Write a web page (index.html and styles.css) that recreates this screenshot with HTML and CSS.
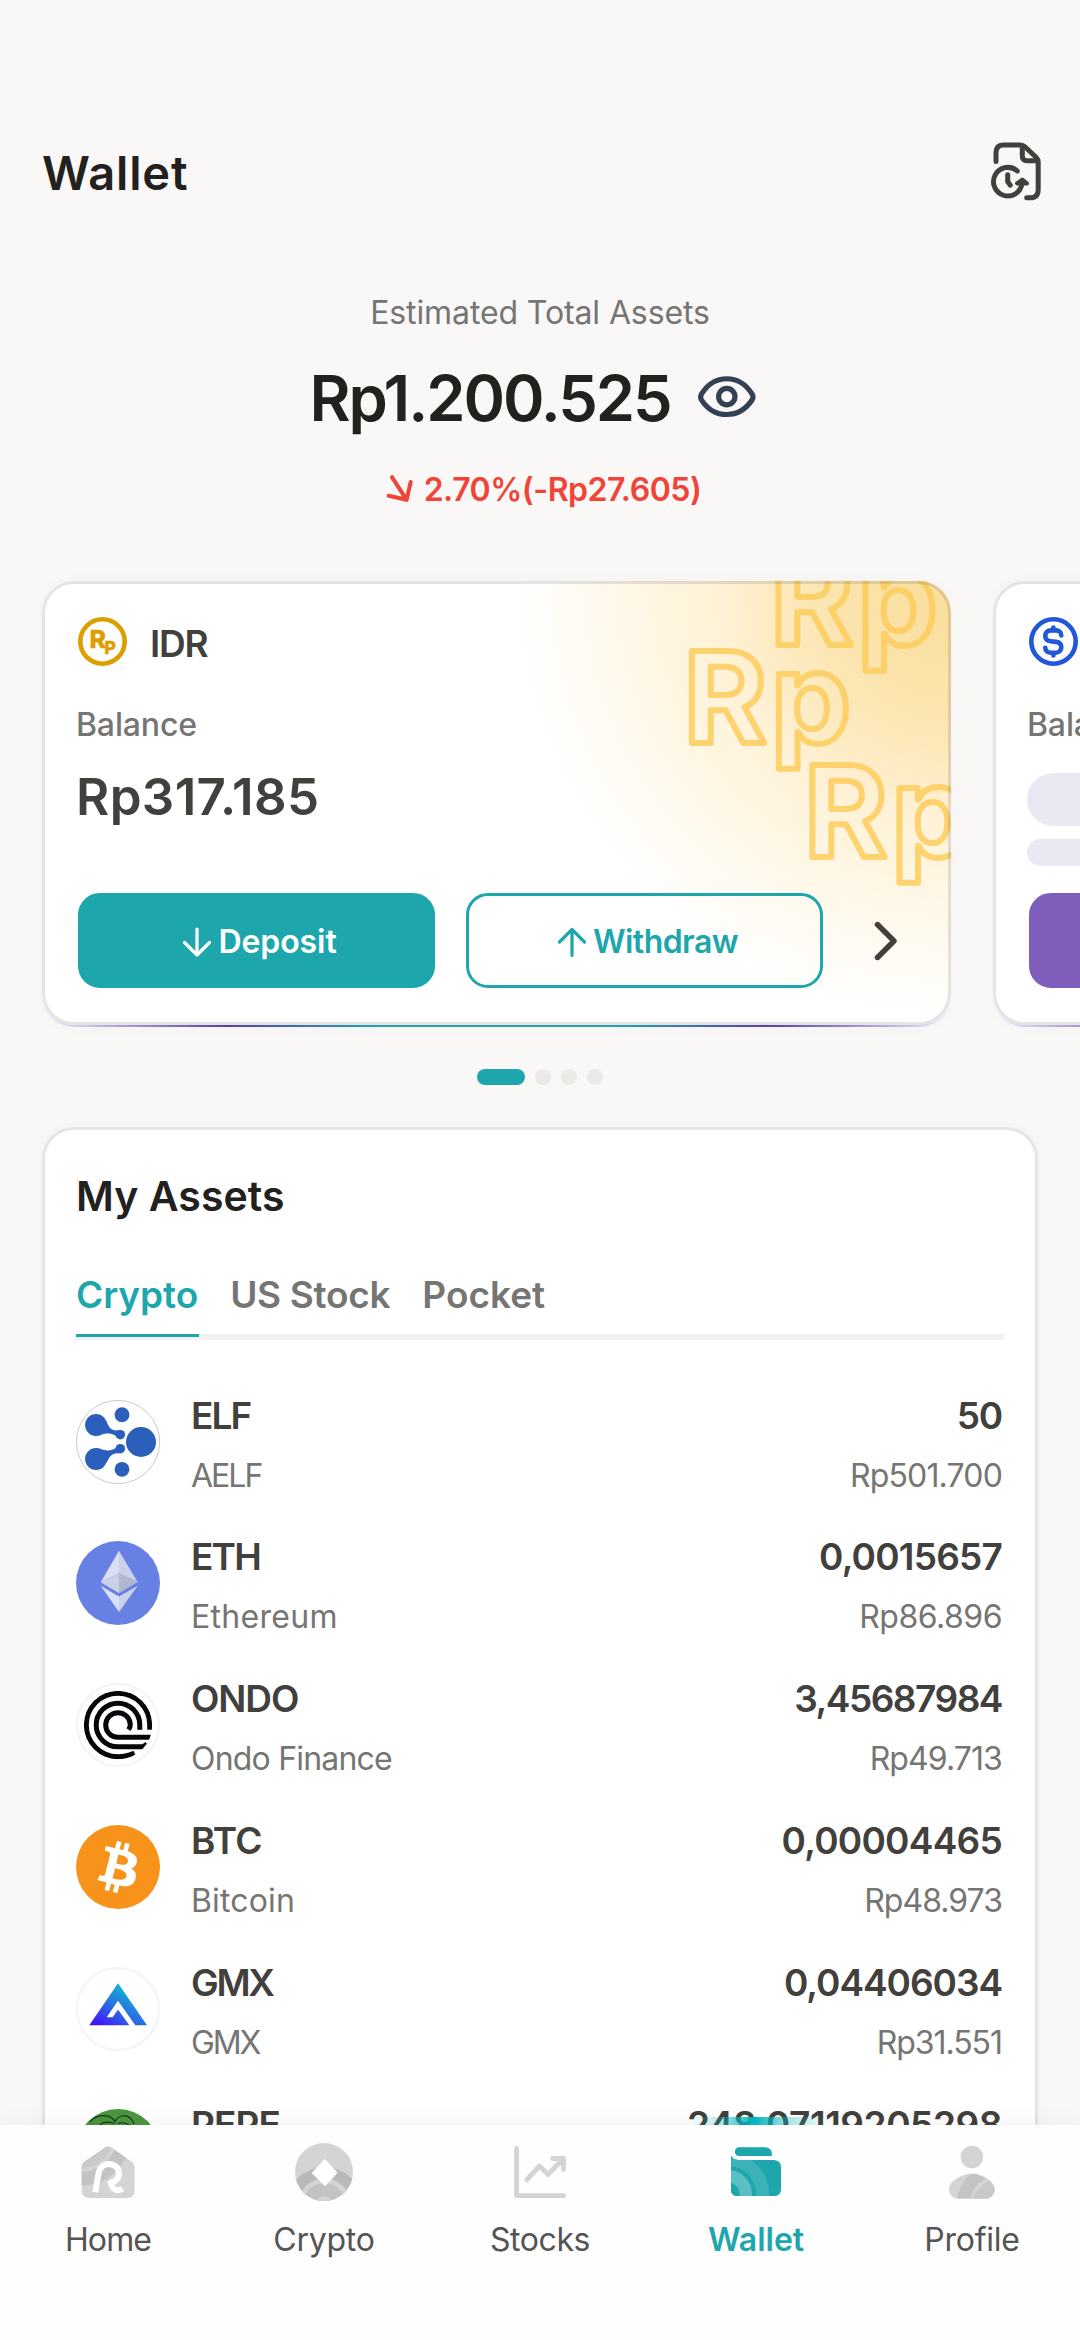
FILE: index.html
```
<!DOCTYPE html>
<html lang="en">
<head>
<meta charset="utf-8">
<title>Wallet</title>
<link rel="stylesheet" href="styles.css">
</head>
<body>
<main class="screen">
  <header class="header">
    <h1 class="header__title">Wallet</h1>
    <svg class="header__history" viewBox="0 0 60 60" fill="none" stroke="currentColor" stroke-width="5" stroke-linecap="round" stroke-linejoin="round">
      <path d="M10 20.5V11.5Q10 3.9 17.5 3.9H34Q37 3.9 39 5.8L50.3 16.5Q52.2 18.4 52.2 21V48.5Q52.2 56.8 44.5 56.8H40.7"/>
      <path d="M36.3 6V15Q36.3 19.7 41 19.7H50"/>
      <path d="M31.3 30A14.3 14.3 0 1 0 36 42.5"/>
      <path d="M21.7 33.8V40.5L24.2 44.2"/>
      <path d="M36.2 38.6L31 42.4H41Z" fill="currentColor" stroke-width="4"/>
    </svg>
  </header>

  <section class="total">
    <p class="total__label">Estimated Total Assets</p>
    <div class="total__value">
      <span class="total__amount">Rp1.200.525</span>
      <svg class="total__eye" viewBox="0 0 64 64" fill="none" stroke="currentColor" stroke-width="5.2" stroke-linejoin="round">
        <path d="M6.4 29.2C19.2 8.6 44.3 8.6 57.2 29.2Q58.8 32 57.2 34.8C44.3 54.4 19.2 54.4 6.4 34.8Q4.8 32 6.4 29.2Z"/>
        <circle cx="31.8" cy="31.6" r="8.2"/>
      </svg>
    </div>
    <div class="total__change">
      <svg class="total__arrow" viewBox="0 0 32 32" fill="none" stroke="currentColor" stroke-width="4" stroke-linecap="round" stroke-linejoin="round"><path d="M8 3.2L22.6 25.8M4.6 21.7L22.6 25.8L26.7 8"/></svg>
      <span>2.70%(-Rp27.605)</span>
    </div>
  </section>

  <section class="carousel">
    <article class="wallet">
      <div class="wallet__body wallet__body--idr">
        <svg class="wallet__mark" viewBox="0 0 290 444">
          <g class="mark">
            <text x="109" y="64">Rp</text>
            <text x="22.500" y="162">Rp</text>
            <text x="143" y="276">Rp</text>
          </g>
        </svg>
        <div class="wallet__head">
          <svg class="wallet__icon wallet__icon--idr" viewBox="0 0 49 49">
            <circle cx="24.500" cy="24.500" r="22.200" fill="none" stroke="currentColor" stroke-width="4.600"/>
            <text class="coin coin--r" x="11.500" y="31">R</text>
            <text class="coin coin--p" x="26.300" y="37">P</text>
          </svg>
          <h2 class="wallet__name">IDR</h2>
        </div>
        <p class="wallet__label">Balance</p>
        <p class="wallet__balance">Rp317.185</p>
        <div class="wallet__actions">
          <button class="btn btn--fill">
            <svg class="btn__icon" viewBox="0 0 36 36"><path d="M18 5V31M5.500 18.500L18 31L30.500 18.500"/></svg>
            <span class="btn__deposit">Deposit</span>
          </button>
          <button class="btn btn--line">
            <svg class="btn__icon" viewBox="0 0 36 36"><path d="M18 31.500V5.500M5.500 18L18 5.500L30.500 18"/></svg>
            <span class="btn__withdraw">Withdraw</span>
          </button>
          <svg class="wallet__next" viewBox="0 0 24 40"><path d="M3.500 3.500L20 20L3.500 36.500"/></svg>
        </div>
      </div>
    </article>
    <article class="wallet">
      <div class="wallet__body">
        <div class="wallet__head">
          <svg class="wallet__icon wallet__icon--usd" viewBox="0 0 49 49" fill="none" stroke="currentColor" stroke-width="4.600" stroke-linecap="round">
            <circle cx="24.500" cy="24.500" r="22.200"/>
            <path d="M32.300 18.500C32.300 15 30 13.400 27 13.400H22C18.500 13.400 16.300 15.700 16.300 18.700C16.300 22 18.400 23.900 21.500 24.200L27 24.900C30.200 25.300 32.300 27.200 32.300 30.300C32.300 33.500 30 35.700 26.700 35.700H22C18.800 35.700 16.300 34 16.300 30.800M24.400 10.500V13M24.400 36V38.500"/>
          </svg>
        </div>
        <p class="wallet__label">Balance</p>
        <div class="skeleton skeleton--lg"></div>
        <div class="skeleton skeleton--sm"></div>
        <div class="wallet__actions wallet__actions--usd"><span class="btn btn--usd"></span></div>
      </div>
    </article>
  </section>

  <div class="dots"><i class="dot dot--on"></i><i class="dot"></i><i class="dot"></i><i class="dot"></i></div>

  <section class="assets">
    <h2 class="assets__title">My Assets</h2>
    <nav class="tabs">
      <span class="tab tab--on">Crypto</span>
      <span class="tab tab--stock">US Stock</span>
      <span class="tab">Pocket</span>
    </nav>
    <ul class="list">
      <li class="row row--elf">
        <svg class="row__icon" viewBox="0 0 84 84">
          <circle cx="42" cy="42" r="41.600" fill="#fff" stroke="#bcbcbc" stroke-width=".8"/>
          <g fill="#2b5fbb">
            <circle cx="65" cy="42" r="15"/><circle cx="46" cy="14.700" r="7.400"/><circle cx="46" cy="69.300" r="7.400"/>
            <circle cx="20" cy="25" r="10.900"/><circle cx="20" cy="59" r="10.900"/>
            <circle cx="44.300" cy="34.700" r="4.800"/><circle cx="44.300" cy="48.700" r="4.800"/>
            <path d="M30.500 21C33 29 37 31.500 43.500 30V39.300C39 34 33 31.500 22 35.700Z"/>
            <path d="M22 48.300C33 52.500 39 50 43.500 44.500V53.300C37 52.500 34 55 30.500 63Z"/>
          </g>
        </svg>
        <div class="row__name"><b>ELF</b><span>AELF</span></div>
        <div class="row__value"><b>50</b><span>Rp501.700</span></div>
      </li>
      <li class="row row--eth">
        <svg class="row__icon" viewBox="0 0 84 84">
          <circle cx="42" cy="42" r="42" fill="#6780e3"/>
          <path fill="#dadff4" d="M43 9.700V32.500L24.700 41.300ZM24.700 44.700L43 55.500V71Z"/>
          <path fill="#cbd1ea" d="M43 9.700V32.500L61.700 41ZM61.700 44.700L43 55.500V71Z"/>
          <path fill="#cad0e7" d="M43 32.500V52.300L24.700 41.300Z"/>
          <path fill="#b2b8cf" d="M43 32.500V52.300L61.700 41Z"/>
        </svg>
        <div class="row__name"><b>ETH</b><span>Ethereum</span></div>
        <div class="row__value"><b>0,0015657</b><span>Rp86.896</span></div>
      </li>
      <li class="row row--ondo">
        <svg class="row__icon" viewBox="0 0 84 84">
          <clipPath id="ondo"><circle cx="42" cy="42" r="34.300"/></clipPath>
          <circle cx="42" cy="42" r="41" fill="#fff" stroke="#f3f3f9" stroke-width="2"/>
          <g clip-path="url(#ondo)" fill="none" stroke="#05070a" stroke-width="5">
            <path d="M73.700 46.700V42A31.700 31.700 0 1 0 42 73.700Q51 73.700 58.500 70"/>
            <path d="M63.800 46.700V42A21.800 21.800 0 1 0 42 63.800H67L71 61"/>
            <path d="M52.500 46.700Q54.300 44 54.300 42A12.300 12.300 0 1 0 42 54.300H75"/>
          </g>
        </svg>
        <div class="row__name"><b>ONDO</b><span>Ondo Finance</span></div>
        <div class="row__value"><b>3,45687984</b><span>Rp49.713</span></div>
      </li>
      <li class="row row--btc">
        <svg class="row__icon" viewBox="0 0 32 32">
          <circle cx="16" cy="16" r="16" fill="#f7931a"/>
          <path fill="#fff" d="M23.189 14.02c.314-2.096-1.283-3.223-3.465-3.975l.708-2.84-1.728-.43-.69 2.765c-.454-.114-.92-.22-1.385-.326l.695-2.783L15.596 6l-.708 2.839c-.376-.086-.746-.17-1.104-.26l.002-.009-2.384-.595-.46 1.846s1.283.294 1.256.312c.7.175.826.638.805 1.006l-.806 3.235c.048.012.11.03.18.057l-.183-.045-1.13 4.532c-.086.212-.303.531-.793.41.018.025-1.256-.313-1.256-.313l-.858 1.978 2.25.561c.418.105.828.215 1.231.318l-.715 2.872 1.727.43.708-2.84c.472.127.93.245 1.378.357l-.706 2.828 1.728.43.715-2.866c2.948.558 5.164.333 6.097-2.333.752-2.146-.037-3.385-1.588-4.192 1.13-.26 1.98-1.003 2.207-2.538zm-3.95 5.538c-.533 2.147-4.148.986-5.32.695l.95-3.805c1.172.293 4.929.872 4.37 3.11zm.535-5.569c-.487 1.953-3.495.96-4.47.717l.86-3.45c.975.243 4.118.696 3.61 2.733z"/>
        </svg>
        <div class="row__name"><b>BTC</b><span>Bitcoin</span></div>
        <div class="row__value"><b>0,00004465</b><span>Rp48.973</span></div>
      </li>
      <li class="row row--gmx">
        <svg class="row__icon" viewBox="0 0 84 84">
          <linearGradient id="gmx" gradientUnits="userSpaceOnUse" x1="50" y1="18" x2="22" y2="64"><stop offset="0" stop-color="#0cbdd2"/><stop offset=".45" stop-color="#2a6fe2"/><stop offset="1" stop-color="#4503fa"/></linearGradient>
          <circle cx="42" cy="42" r="41" fill="#fff" stroke="#f3f3f9" stroke-width="2"/>
          <path fill="url(#gmx)" d="M42 16.300L71 58.300H59.300L42 33.700L30.700 50.300H36.700L42 42.500L53.300 58.300H13.300Z"/>
        </svg>
        <div class="row__name"><b>GMX</b><span>GMX</span></div>
        <div class="row__value"><b>0,04406034</b><span>Rp31.551</span></div>
      </li>
      <li class="row row--pepe">
        <svg class="row__icon" viewBox="0 0 84 84">
          <circle cx="42" cy="42" r="42" fill="#4c9540"/>
          <path fill="none" stroke="#143a12" stroke-width="1.100" d="M14 13C20 5 35 4 39 13C43 4 55 5 58 15M24 15.500C28 12.500 34 13 38 14.500M42 14.500C46 13 50 14 53 16"/>
        </svg>
        <div class="row__name"><b>PEPE</b></div>
        <div class="row__value"><b>248,07119205298</b></div>
      </li>
    </ul>
  </section>
</main>

<nav class="nav">
  <a class="nav__item nav__item--home">
    <svg class="nav__icon" viewBox="0 0 64 64">
      <clipPath id="house"><path d="M5.700 27Q5.700 23.800 8.300 22L28.500 8Q32.300 5.600 36 8L56 22Q58.700 23.800 58.700 27V50Q58.700 58 51 58H13.500Q5.700 58 5.700 50Z"/></clipPath>
      <g clip-path="url(#house)">
        <rect width="64" height="64" fill="#d5d4d2"/>
        <circle cx="6" cy="-3" r="48.300" fill="#c3c3c1"/><circle cx="6" cy="-3" r="34.700" fill="#d5d4d2"/><circle cx="6" cy="-3" r="30.700" fill="#cac9c7"/>
      </g>
      <path fill="none" stroke="#fff" stroke-width="6" d="M19.300 52.300L22.400 34C24 25.500 30.500 22.500 36.500 24.600C44.500 27.500 45 37.500 38.300 41.300L34.800 43C36 48.500 40.500 52.500 46.500 48.700"/>
    </svg>
    <span>Home</span>
  </a>
  <a class="nav__item nav__item--crypto">
    <svg class="nav__icon" viewBox="0 0 64 64">
      <clipPath id="coin"><circle cx="32" cy="32" r="29"/></clipPath>
      <g clip-path="url(#coin)">
        <rect width="64" height="64" fill="#d5d4d2"/>
        <circle cx="32.500" cy="65" r="38" fill="#bab9b7"/><circle cx="32.500" cy="65" r="26.500" fill="#d5d4d2"/><circle cx="32.500" cy="65" r="22" fill="#c3c3c1"/><circle cx="32.500" cy="65" r="9" fill="#d5d4d2"/>
      </g>
      <path fill="#fff" d="M32.700 19L45.700 32.700L33 46.300L19.700 33Z"/>
    </svg>
    <span>Crypto</span>
  </a>
  <a class="nav__item nav__item--stocks">
    <svg class="nav__icon" viewBox="0 0 64 64" fill="none" stroke="#d5d4d2" stroke-width="4.800" stroke-linecap="round" stroke-linejoin="round">
      <path d="M8.500 8.300V55.700H55.700M18.600 40L31.500 26L40 34.500L55.500 18.500M44.500 18.500H55.500V29.500"/>
    </svg>
    <span>Stocks</span>
  </a>
  <a class="nav__item nav__item--wallet">
    <svg class="nav__icon" viewBox="0 0 64 64">
      <clipPath id="purse"><path d="M7 15.500Q9 20 15.500 20H50Q57 20.500 57 27V49.500Q57 56 50.500 56H13.500Q7 56 7 49.500Z"/></clipPath>
      <path fill="#1da7ad" d="M15.200 7.300H41.500Q47.800 8 47.800 13.500V16H15.200A4.350 4.350 0 0 1 15.200 7.300Z"/>
      <g clip-path="url(#purse)">
        <rect width="64" height="64" fill="#1da7ad"/>
        <circle cx="4" cy="54" r="41" fill="#3bb2b8"/><circle cx="4" cy="54" r="28" fill="#1da7ad"/><circle cx="4" cy="54" r="24" fill="#5bbfc4"/><circle cx="4" cy="54" r="11.500" fill="#1da7ad"/>
      </g>
    </svg>
    <span>Wallet</span>
  </a>
  <a class="nav__item nav__item--profile">
    <svg class="nav__icon" viewBox="0 0 64 64">
      <clipPath id="bust"><path d="M9 49C9 41 22 33.700 32 33.700C42 33.700 54.600 42 54.600 49.500C54.600 55 50 58.600 45 58.600H19C13 58.600 9 55 9 49Z"/></clipPath>
      <circle cx="31.900" cy="17" r="11.200" fill="#d5d4d2"/>
      <g clip-path="url(#bust)">
        <rect width="64" height="64" fill="#d5d4d2"/>
        <circle cx="60" cy="66" r="43.500" fill="#c3c3c1"/><circle cx="60" cy="66" r="31" fill="#d5d4d2"/><circle cx="60" cy="66" r="27.500" fill="#cac9c7"/>
      </g>
    </svg>
    <span>Profile</span>
  </a>
</nav>
</body>
</html>
```
FILE: styles.css
```
* { box-sizing: border-box; margin: 0; padding: 0; }

body {
  width: 1080px;
  height: 2340px;
  overflow: hidden;
  position: relative;
  background: #f9f8f6;
  color: #42403c;
  font-family: Inter, "Liberation Sans", sans-serif;
  font-size: 32px;
  line-height: 40px;
}

svg { display: block; flex: none; }
.screen { height: 2340px; padding-top: 137px; overflow: hidden; }

/* Header */
.header {
  display: flex;
  align-items: center;
  justify-content: space-between;
  height: 72px;
  padding: 0 34px 0 42px;
}
.header__title { font-size: 47px; line-height: 72px; font-weight: 600; letter-spacing: .85px; color: #22211d; }
.header__history { width: 60px; height: 60px; margin-top: -4px; }

/* Total */
.total { padding-top: 84px; }
.total__label { text-align: center; color: #757573; letter-spacing: -.11px; }
.total__value {
  display: flex;
  align-items: center;
  justify-content: center;
  gap: 24px;
  height: 76px;
  margin-top: 27px;
  padding-right: 12px;
}
.total__amount { font-size: 63px; line-height: 76px; font-weight: 600; letter-spacing: -2.04px; color: #22211d; }
.total__eye { width: 64px; height: 64px; margin-top: -2px; color: #344054; }
.total__change {
  display: flex;
  align-items: center;
  justify-content: center;
  gap: 8px;
  height: 40px;
  margin-top: 34px;
  padding-left: 5px;
  color: #f04438;
  font-weight: 600;
  letter-spacing: -.5px;
}
.total__arrow { width: 32px; height: 32px; }

/* Wallet cards */
.carousel { display: flex; gap: 42px; margin-top: 71px; padding-left: 42px; }
.wallet {
  flex: none;
  width: 909px;
  height: 446px;
  padding-bottom: 2px;
  border-radius: 32px;
  background: linear-gradient(90deg, #f1eef6 0, #b7a4d6 8%, #5b3fae 20%, #3d72b4 29%, #1da7ad 37%, #1da7ad 63%, #3d72b4 71%, #5b3fae 80%, #b7a4d6 92%, #f1eef6 100%);
  box-shadow: 0 0 14px rgba(60, 50, 90, .03);
}
.wallet__body {
  position: relative;
  height: 444px;
  padding: 36px 34px 0;
  border-radius: 32px;
  background: #fff;
  overflow: hidden;
}
.wallet__body--idr {
  background:
    radial-gradient(ellipse 225px 215px at 100% 4%, rgba(247, 214, 134, .6), rgba(249, 219, 146, .48) 50%, rgba(253, 236, 200, 0) 100%),
    radial-gradient(ellipse 440px 440px at 100% 0, #fde9bb 0, #feefcf 45%, #fff5df 65%, #fffaf0 82%, #fff 100%);
}
.wallet__body::after {
  content: "";
  position: absolute;
  inset: 0;
  border: 3px solid rgba(34, 33, 40, .12);
  border-radius: 32px;
}
.wallet__mark { position: absolute; top: 0; right: 0; width: 290px; height: 444px; }
.mark text {
  font-size: 127px;
  font-weight: 700;
  letter-spacing: 4px;
  fill: none;
  stroke: #fdcd5c;
  stroke-opacity: .85;
  stroke-width: 6px;
  stroke-linejoin: round;
}
.wallet__head { position: relative; display: flex; gap: 22px; height: 49px; margin-left: 2px; }
.wallet__icon { width: 49px; height: 49px; }
.wallet__icon--idr { color: #db9f00; }
.wallet__icon--usd { color: #2257d9; }
.coin { font-weight: 800; fill: currentColor; stroke: currentColor; stroke-width: .3px; }
.coin--r { font-size: 25px; }
.coin--p { font-size: 18px; }
.wallet__name { padding: 4px 0 0 1px; font-size: 37px; line-height: 45px; font-weight: 600; letter-spacing: -1.2px; }
.wallet__label { margin-top: 39px; font-weight: 500; color: #757573; letter-spacing: -.15px; }
.wallet__balance { margin-top: 22px; font-size: 51px; line-height: 60px; font-weight: 600; letter-spacing: .37px; }
.wallet__actions { position: relative; display: flex; align-items: center; height: 95px; margin: 66px 0 0 2px; }
.btn {
  display: flex;
  align-items: center;
  justify-content: center;
  width: 357px;
  height: 95px;
  padding: 2px 0 0 3px;
  border: 3px solid #1da7ad;
  border-radius: 22px;
  background: transparent;
  color: #1da7ad;
  font: 600 32px/40px Inter, "Liberation Sans", sans-serif;
}
.btn--fill { background: #1da7ad; color: #fff; }
.btn--line { margin-left: 31px; }
.btn--usd { border-color: #7f5dbb; background: #7f5dbb; }
.btn__icon { width: 36px; height: 36px; margin-right: 3px; fill: none; stroke: currentColor; stroke-width: 3.2; stroke-linecap: round; stroke-linejoin: round; }
.btn__deposit { letter-spacing: -.07px; }
.btn__withdraw { letter-spacing: -.57px; }
.wallet__next { width: 24px; height: 40px; margin-left: 51px; fill: none; stroke: #42403c; stroke-width: 5.4; stroke-linecap: round; stroke-linejoin: round; }
.skeleton { background: #e9e9f3; }
.skeleton--lg { width: 300px; height: 53px; margin-top: 28px; border-radius: 27px; }
.skeleton--sm { width: 200px; height: 27px; margin-top: 13px; border-radius: 14px; }
.wallet__actions--usd { margin-top: 27px; }

/* Page dots */
.dots { display: flex; justify-content: center; gap: 10px; margin-top: 42px; }
.dot { width: 16px; height: 16px; border-radius: 8px; background: #ebeae6; }
.dot--on { width: 48px; background: #1da7ad; }

/* Assets */
.assets {
  height: 1300px;
  margin: 42px 42px 0;
  padding: 40px 31px 0;
  border: 3px solid #e5e5e5;
  border-radius: 32px;
  background: #fff;
  box-shadow: 0 0 14px rgba(60, 50, 90, .03);
}
.assets__title { font-size: 41px; line-height: 52px; font-weight: 600; letter-spacing: .05px; color: #22211d; }
.tabs { display: flex; gap: 32px; margin-top: 49px; border-bottom: 6px solid #f2f2f2; }
.tab { position: relative; padding-bottom: 15px; font-size: 37px; line-height: 48px; font-weight: 600; color: #757573; }
.tab--on { color: #1da7ad; letter-spacing: -.08px; }
.tab--on::after { content: ""; position: absolute; left: 0; right: -1px; top: 100%; height: 3px; background: #1da7ad; }
.tab--stock { letter-spacing: -.3px; }

.list { display: flex; flex-direction: column; gap: 37.8px; padding: 51.7px 2px 0 0; list-style: none; }
.row { display: flex; height: 104px; }
.row__icon { width: 84px; height: 84px; margin: 8px 31px 0 0; }
.row__name, .row__value { display: flex; flex-direction: column; gap: 16px; }
.row__value { margin-left: auto; text-align: right; }
.row b { font-size: 37px; line-height: 48px; font-weight: 600; }
.row span { color: #757573; }

.row--elf .row__name b { letter-spacing: -1.9px; }
.row--elf .row__name span { letter-spacing: -2px; }
.row--elf .row__value b { letter-spacing: -1.2px; }
.row--elf .row__value span { letter-spacing: -.84px; }
.row--eth .row__name b { letter-spacing: -1.8px; }
.row--eth .row__name span { letter-spacing: .3px; }
.row--eth .row__value b { letter-spacing: -.8px; }
.row--eth .row__value span { letter-spacing: -.5px; }
.row--ondo .row__name b { letter-spacing: -1.1px; }
.row--ondo .row__name span { letter-spacing: -.8px; }
.row--ondo .row__value b { letter-spacing: -1.5px; }
.row--ondo .row__value span { letter-spacing: -.9px; }
.row--btc .row__name b { letter-spacing: -.6px; }
.row--btc .row__name span { letter-spacing: .16px; }
.row--btc .row__value b { letter-spacing: -.75px; }
.row--btc .row__value span { letter-spacing: -.96px; }
.row--gmx .row__name b { letter-spacing: -2.3px; }
.row--gmx .row__name span { letter-spacing: -2.2px; }
.row--gmx .row__value b { letter-spacing: -1.05px; }
.row--gmx .row__value span { letter-spacing: -1.05px; }
.row--pepe .row__name b { letter-spacing: -.9px; }
.row--pepe .row__value b { letter-spacing: -.45px; }

/* Bottom navigation */
.nav {
  position: absolute;
  left: 0;
  right: 0;
  bottom: 0;
  display: flex;
  height: 215px;
  padding-top: 15px;
  background: #fefefe;
  box-shadow: 0 -4px 20px rgba(0, 0, 0, .045);
}
.nav__item { position: relative; flex: 1; display: flex; flex-direction: column; align-items: center; gap: 16px; color: #555553; }
.nav__icon { width: 64px; height: 64px; }
.nav__item--home { letter-spacing: -.9px; }
.nav__item--crypto { letter-spacing: -.23px; }
.nav__item--stocks { letter-spacing: -.42px; }
.nav__item--profile { letter-spacing: -.25px; }
.nav__item--wallet { color: #1da7ad; font-weight: 600; }
.nav__item--wallet::before {
  content: "";
  position: absolute;
  top: -23px;
  left: 43px;
  width: 136px;
  height: 8px;
  background: linear-gradient(90deg, rgba(0, 182, 189, 0), rgba(0, 182, 189, .25) 20%, rgba(0, 182, 189, 1) 47%, rgba(0, 182, 189, .35) 70%, rgba(0, 182, 189, 0));
}
```
